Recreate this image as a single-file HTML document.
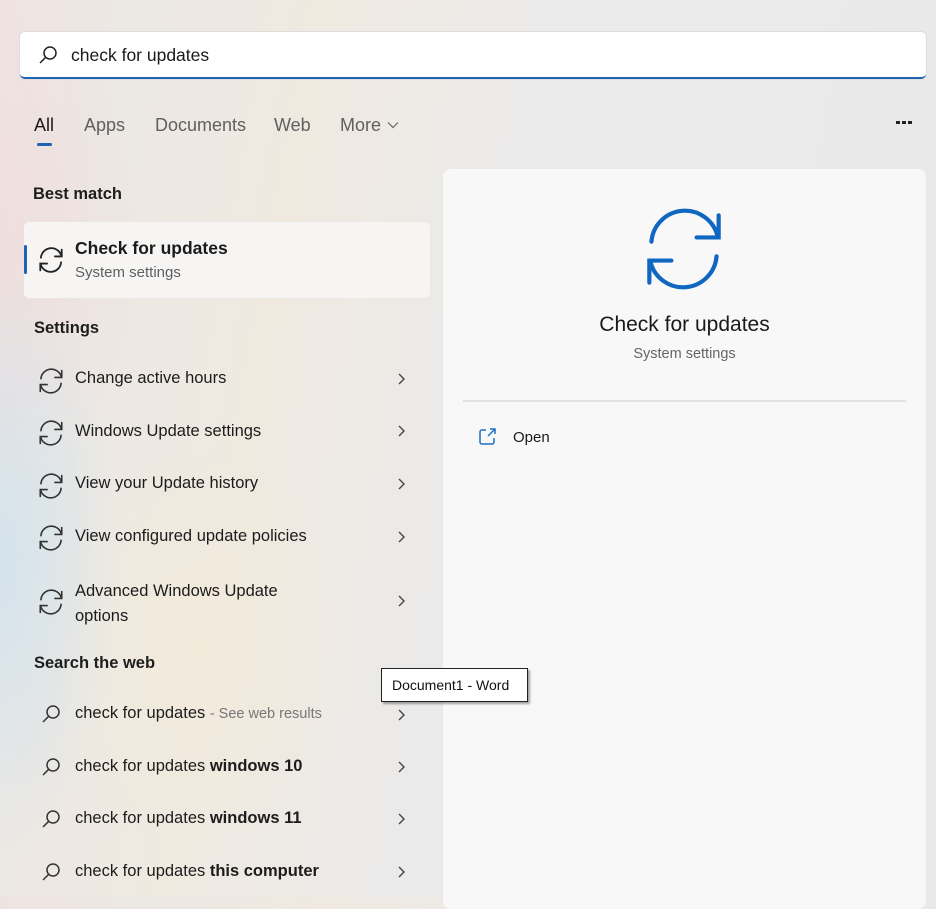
<!DOCTYPE html>
<html><head><meta charset="utf-8"><style>
*{margin:0;padding:0;box-sizing:border-box}
body{width:936px;height:897px;overflow:hidden;position:relative;font-family:"Liberation Sans",sans-serif;color:#1a1a1a;
background:linear-gradient(100deg,#efe3e1 0%,#ece8e4 12%,#efe9e0 30%,#ebeaea 50%,#e9e9ea 100%)}
.bgtint{position:absolute;left:0;top:0;width:440px;height:897px;background:radial-gradient(ellipse 120px 300px at 0 560px,rgba(200,225,240,.7),transparent),radial-gradient(ellipse 160px 200px at 200px 650px,rgba(245,235,215,.6),transparent),radial-gradient(ellipse 150px 250px at 0 250px,rgba(240,215,215,.5),transparent)}
.a{position:absolute;white-space:nowrap}
.search{position:absolute;left:20px;top:32px;width:906px;height:47px;background:#fff;border-radius:5px;border-bottom:2px solid #1f64b0;box-shadow:0 0 0 1px #ddd}
.tab{position:absolute;top:115px;font-size:18px;color:#5f5f5f}
.h{font-size:16.5px;font-weight:bold;color:#1e1e1e}
.it{font-size:16.5px;color:#1c1c1c}
.chev{position:absolute;left:396px;width:10px;height:14px}
.ico{position:absolute;left:38px;width:26px;height:26px}
.panel{position:absolute;left:443px;top:169px;width:483px;height:740px;background:#f8f8f8;border-radius:8px}
</style></head><body>
<div class="bgtint"></div>
<div class="search"></div>
<svg class="a" style="left:38px;top:45px" width="20" height="20" viewBox="0 0 20 20" fill="none" stroke="#222" stroke-width="1.5"><circle cx="12" cy="8" r="6"/><path d="M7.7 12.3L2 18"/></svg>
<div class="a" style="left:71px;top:45px;font-size:17.5px">check for updates</div>

<div class="tab" style="left:34px;color:#1a1a1a">All</div>
<div class="a" style="left:37px;top:143px;width:15px;height:3px;border-radius:2px;background:#1f64b0"></div>
<div class="tab" style="left:84px">Apps</div>
<div class="tab" style="left:155px">Documents</div>
<div class="tab" style="left:274px">Web</div>
<div class="tab" style="left:340px">More</div>
<svg class="a" style="left:387px;top:121px" width="12" height="8" viewBox="0 0 12 8" fill="none" stroke="#666" stroke-width="1.2"><path d="M1 1.5l5 5 5-5"/></svg>
<div class="a" style="left:896px;top:121px;width:4px;height:3px;background:#222;box-shadow:6px 0 #222,12px 0 #222"></div>

<div class="a h" style="left:33px;top:185px">Best match</div>
<div class="a" style="left:24px;top:222px;width:406px;height:76px;background:#f6f5f4;border-radius:5px"></div>
<div class="a" style="left:24px;top:245px;width:3px;height:29px;background:#1f64b0;border-radius:2px"></div>
<svg class="ico" style="top:247px" viewBox="0 0 80 80" fill="none" stroke="#222" stroke-width="5.5" stroke-linecap="round"><path d="M9 33A32 32 0 0 1 72 28M73 8V29H52M71 47A32 32 0 0 1 8 52M7 72V51H28"/></svg>
<div class="a" style="left:75px;top:238px;font-size:17.5px;font-weight:bold;color:#1a1a1a">Check for updates</div>
<div class="a" style="left:75px;top:264px;font-size:15px;color:#5f5f5f">System settings</div>

<div class="a h" style="left:34px;top:319px">Settings</div>
<svg class="ico" style="top:368px" viewBox="0 0 80 80" fill="none" stroke="#333" stroke-width="5" stroke-linecap="round"><path d="M9 33A32 32 0 0 1 72 28M73 8V29H52M71 47A32 32 0 0 1 8 52M7 72V51H28"/></svg>
<div class="a it" style="left:75px;top:369px">Change active hours</div>
<svg class="ico" style="top:420px" viewBox="0 0 80 80" fill="none" stroke="#333" stroke-width="5" stroke-linecap="round"><path d="M9 33A32 32 0 0 1 72 28M73 8V29H52M71 47A32 32 0 0 1 8 52M7 72V51H28"/></svg>
<div class="a it" style="left:75px;top:422px">Windows Update settings</div>
<svg class="ico" style="top:473px" viewBox="0 0 80 80" fill="none" stroke="#333" stroke-width="5" stroke-linecap="round"><path d="M9 33A32 32 0 0 1 72 28M73 8V29H52M71 47A32 32 0 0 1 8 52M7 72V51H28"/></svg>
<div class="a it" style="left:75px;top:474px">View your Update history</div>
<svg class="ico" style="top:525px" viewBox="0 0 80 80" fill="none" stroke="#333" stroke-width="5" stroke-linecap="round"><path d="M9 33A32 32 0 0 1 72 28M73 8V29H52M71 47A32 32 0 0 1 8 52M7 72V51H28"/></svg>
<div class="a it" style="left:75px;top:527px">View configured update policies</div>
<svg class="ico" style="top:589px" viewBox="0 0 80 80" fill="none" stroke="#333" stroke-width="5" stroke-linecap="round"><path d="M9 33A32 32 0 0 1 72 28M73 8V29H52M71 47A32 32 0 0 1 8 52M7 72V51H28"/></svg>
<div class="a it" style="left:75px;top:579px;line-height:25px">Advanced Windows Update<br>options</div>

<div class="a h" style="left:34px;top:654px">Search the web</div>
<svg class="a" style="left:41px;top:704px" width="20" height="20" viewBox="0 0 20 20" fill="none" stroke="#333" stroke-width="1.5"><circle cx="12" cy="8" r="6"/><path d="M7.7 12.3L2 18"/></svg>
<div class="a it" style="left:75px;top:704px">check for updates <span style="color:#777;font-size:14.5px">- See web results</span></div>
<svg class="a" style="left:41px;top:757px" width="20" height="20" viewBox="0 0 20 20" fill="none" stroke="#333" stroke-width="1.5"><circle cx="12" cy="8" r="6"/><path d="M7.7 12.3L2 18"/></svg>
<div class="a it" style="left:75px;top:757px">check for updates <b>windows 10</b></div>
<svg class="a" style="left:41px;top:809px" width="20" height="20" viewBox="0 0 20 20" fill="none" stroke="#333" stroke-width="1.5"><circle cx="12" cy="8" r="6"/><path d="M7.7 12.3L2 18"/></svg>
<div class="a it" style="left:75px;top:809px">check for updates <b>windows 11</b></div>
<svg class="a" style="left:41px;top:862px" width="20" height="20" viewBox="0 0 20 20" fill="none" stroke="#333" stroke-width="1.5"><circle cx="12" cy="8" r="6"/><path d="M7.7 12.3L2 18"/></svg>
<div class="a it" style="left:75px;top:862px">check for updates <b>this computer</b></div>

<svg class="chev" style="top:372px" viewBox="0 0 10 14" fill="none" stroke="#444" stroke-width="1.4"><path d="M3 2l5 5-5 5"/></svg>
<svg class="chev" style="top:424px" viewBox="0 0 10 14" fill="none" stroke="#444" stroke-width="1.4"><path d="M3 2l5 5-5 5"/></svg>
<svg class="chev" style="top:477px" viewBox="0 0 10 14" fill="none" stroke="#444" stroke-width="1.4"><path d="M3 2l5 5-5 5"/></svg>
<svg class="chev" style="top:530px" viewBox="0 0 10 14" fill="none" stroke="#444" stroke-width="1.4"><path d="M3 2l5 5-5 5"/></svg>
<svg class="chev" style="top:594px" viewBox="0 0 10 14" fill="none" stroke="#444" stroke-width="1.4"><path d="M3 2l5 5-5 5"/></svg>
<svg class="chev" style="top:708px" viewBox="0 0 10 14" fill="none" stroke="#444" stroke-width="1.4"><path d="M3 2l5 5-5 5"/></svg>
<svg class="chev" style="top:760px" viewBox="0 0 10 14" fill="none" stroke="#444" stroke-width="1.4"><path d="M3 2l5 5-5 5"/></svg>
<svg class="chev" style="top:812px" viewBox="0 0 10 14" fill="none" stroke="#444" stroke-width="1.4"><path d="M3 2l5 5-5 5"/></svg>
<svg class="chev" style="top:865px" viewBox="0 0 10 14" fill="none" stroke="#444" stroke-width="1.4"><path d="M3 2l5 5-5 5"/></svg>

<div class="panel"></div>
<svg class="a" style="left:642px;top:207px" width="84" height="84" viewBox="0 0 80 80" fill="none" stroke="#0f67c0" stroke-width="4" stroke-linecap="round"><path d="M9 33A32 32 0 0 1 72 28M73 8V29H52M71 47A32 32 0 0 1 8 52M7 72V51H28"/></svg>
<div class="a" style="left:443px;width:483px;text-align:center;top:313px;font-size:21px;color:#1a1a1a">Check for updates</div>
<div class="a" style="left:443px;width:483px;text-align:center;top:346px;font-size:14.5px;color:#666">System settings</div>
<div class="a" style="left:463px;top:400px;width:443px;height:2px;background:#e2e2e2"></div>
<svg class="a" style="left:478px;top:427px" width="19" height="19" viewBox="0 0 19 19" fill="none" stroke="#1f6fc0" stroke-width="1.5"><path d="M8 3H4a2 2 0 0 0-2 2v10a2 2 0 0 0 2 2h10a2 2 0 0 0 2-2v-4M10 9l7-7M12 2h5v5"/></svg>
<div class="a" style="left:513px;top:429px;font-size:15px">Open</div>

<div class="a" style="left:381px;top:668px;width:147px;height:34px;background:#fff;border:1px solid #222;box-shadow:2px 2px 2px rgba(0,0,0,.35);font-size:14px;padding:8px 0 0 10px;color:#111">Document1 - Word</div>
</body></html>
